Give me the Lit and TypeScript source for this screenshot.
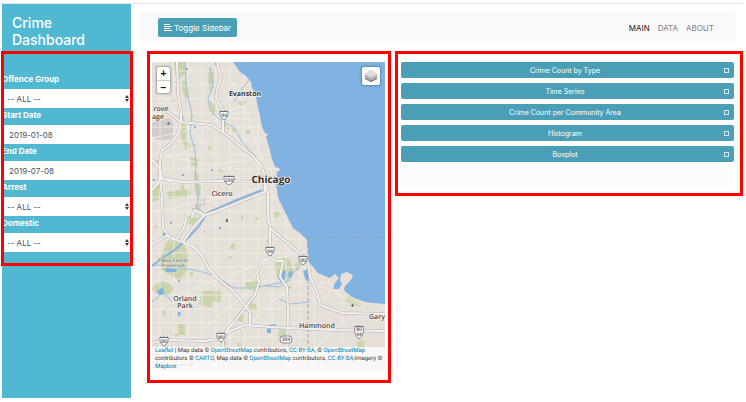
import { LitElement, html, css, svg } from "lit";
import { customElement } from "lit/decorators.js";

const SHORE =
  "M81 0 L84 4 L88 10 L94 14 L99 20 L100 26 L104 34 L105 41 L108 54 L110 65 L113 71 L116 72 L114 75 L118 88 L120 97 L123 105 L127 106 L128 108 L125 110 L124 121 L126 135 L131 146 L137 158 L141 166 L149 172 L155 178 L156 186 L157 200 L166 211 L178 216 L183 212 L185 214 L187 216 L183 221 L181 227 L187 227 L190 222 L188 218 L189 212 L195 210 L201 213 L199 218 L193 224 L192 228 L195 231 L200 235 L213 240 L233 242 V0 Z";

const HIGHWAYS = [
  "M25 0 L26 31 L29 50 L29 60 L27 70 L20 81 L10 88 L8 100 L8 115 L10 135 L11 166 L18 176 L31 180 L43 186 L50 194 L57 207 L65 216 L80 228 L90 240 L98 250 L98 263",
  "M13 48 L29 60 L60 63 L75 73 L88 84 L100 93 L110 105 L113 115 L113 130",
  "M71 70 L71 48 L64 36 L65 28 L69 15 L65 0",
  "M0 98 L9 108 L10 116 L30 120 L70 119 L110 120",
  "M0 128 L10 116 L20 120",
  "M113 130 L90 139 L65 149 L53 153 L43 163 L31 180",
  "M40 156 L42 148 L52 153",
  "M0 182 L14 174 L24 177",
  "M24 177 L32 166 L35 153",
  "M113 118 L116 131 L116 153 L118 166 L132 178 L150 193 L156 201 L158 215 L165 230 L168 243 L190 251 L233 252",
  "M118 166 L118 196 L109 200 L105 210 L107 220 L103 233 L93 246 L82 260 L75 268 L71 280 L70 309",
  "M118 196 L125 199 L131 199 L128 215 L135 225 L136 250 L135 300",
  "M0 281 L13 278 L53 279 L65 277 L73 271 L93 263 L118 265 L180 268 L233 269",
];

const STREETS = [
  "M0 20 L40 70 L100 130 L130 160",
  "M34 0 L60 40 L84 75 L112 112",
  "M0 76 L30 70 L90 44 L104 40",
  "M8 93 L60 103 L110 96",
  "M80 20 L96 53 L104 82 L118 110",
  "M40 70 L70 56 L104 58",
  "M0 150 L50 140 L110 126",
  "M0 251 L48 224 L100 205 L155 188",
  "M20 309 L60 258 L110 220",
  "M98 263 L120 240 L156 215",
  "M156 220 L182 230 L210 244",
  "M168 220 L178 220 L183 229 L191 229",
  "M190 240 L191 280",
  "M160 290 L190 260 L233 246",
];

const STREAMS = [
  "M33 0 L34 20 L37 40 L40 52 L38 72 L43 88 L44 104 L43 116 L47 132 L44 146 L52 150",
  "M58 5 L61 24 L56 36 L58 48 L67 57 L83 66 L90 80 L103 94 L108 103",
  "M97 18 L90 27 L82 40",
  "M0 203 L18 204 L42 208 L62 213 L82 226 L102 226 L122 222 L139 218",
  "M113 224 L128 225 L136 219 L144 207 L155 197",
  "M126 236 L138 242 L157 240",
  "M0 240 L12 230 L20 240",
];

const PARKS = [
  "M22 0 L34 0 L33 12 L26 18 L22 9Z",
  "M30 18 L35 20 L37 34 L34 40 L31 30Z",
  "M30 52 L35 62 L34 76 L39 84 L34 88 L29 75Z",
  "M57 6 L62 8 L62 24 L58 30 L56 20Z",
  "M57 38 L64 43 L66 52 L60 53Z",
  "M72 61 L80 66 L77 68 L71 64Z",
  "M86 40 L93 38 L95 43 L88 44Z",
  "M38 94 L47 98 L44 106 L39 102Z",
  "M42 110 L46 112 L49 128 L46 140 L43 130Z",
  "M0 125 L8 123 L7 138 L1 139Z",
  "M15 130 L33 127 L39 130 L37 134 L17 137Z",
  "M43 142 L49 141 L48 152 L44 152Z",
  "M16 178 L31 182 L37 191 L36 207 L27 218 L8 207 L7 197Z",
  "M33 153 L51 157 L43 164 L34 163Z",
  "M50 229 L69 229 L69 240 L60 240 L60 246 L47 242Z",
  "M26 262 L33 262 L33 273 L26 273Z",
  "M94 220 L104 218 L110 224 L104 230 L94 226Z",
  "M123 201 L133 195 L138 198 L142 211 L133 221 L125 216Z",
  "M97 242 L104 242 L105 248 L98 248Z",
  "M86 253 L93 253 L92 260 L87 260Z",
  "M127 267 L134 267 L134 278 L126 275Z",
  "M195 234 L203 239 L211 243 L207 245 L194 239Z",
  "M117 79 L119 95 L122 98 L120 86Z",
  "M122 149 L128 151 L126 157 L121 154Z",
  "M77 183 L83 181 L83 187 L77 188Z",
  "M142 203 L147 199 L150 206 L145 209Z",
  "M205 280 L212 278 L213 288 L206 288Z",
  "M2 224 L12 218 L22 226 L15 235 L3 231Z",
];

const PONDS = [
  "M13 206 L25 207 L24 210 L14 210Z",
  "M5 229 L11 225 L12 232 L7 233Z",
  "M128 211 L134 208 L133 217 L129 220 L126 216Z",
  "M136 211 L139 208 L141 213 L137 217Z",
  "M151 209 L157 207 L159 216 L154 219Z",
  "M115 267 L119 266 L119 271 L115 271Z",
  "M26 250 L29 250 L28 254 L26 254Z",
  "M161 200 L164 199 L164 203Z",
  "M116 263 L124 262 L123 266 L119 266Z",
  "M10 172 L14 169 L14 175Z",
];

interface Shield { x: number; y: number; n: string }
const SHIELDS: Shield[] = [
  { x: 72, y: 53, n: "94" },
  { x: 77, y: 118, n: "290" },
  { x: 118, y: 189, n: "94" },
  { x: 151, y: 198, n: "90" },
  { x: 12, y: 279, n: "80" },
  { x: 69, y: 275, n: "80" },
];

interface Place { x: number; y: number; n: string; k: string }
const PLACES: Place[] = [
  { x: 93, y: 34, n: "Evanston", k: "town" },
  { x: 119, y: 121, n: "Chicago", k: "city" },
  { x: 70, y: 134, n: "Cicero", k: "mid" },
  { x: 9, y: 49, n: "rove", k: "mid" },
  { x: 6, y: 57, n: "age", k: "mid" },
  { x: 21, y: 200, n: "Palos Forest", k: "park" },
  { x: 21, y: 205, n: "Preserves", k: "park" },
  { x: 33, y: 239, n: "Orland", k: "mid" },
  { x: 33, y: 246, n: "Park", k: "mid" },
  { x: 165, y: 266, n: "Hammond", k: "mid" },
  { x: 225, y: 257, n: "Gary", k: "mid" },
];

const range = (n: number, step: number, start = 0) =>
  Array.from({ length: n }, (_, i) => start + i * step);

@customElement("city-map")
class CityMap extends LitElement {
  static styles = css`
    :host { display: block; position: relative; font-family: Roboto, "Liberation Sans", sans-serif; }
    .map { display: block; width: 100%; height: auto; background: #e6dfd8; text-rendering: geometricPrecision; }
    .minor { stroke: #eae4de; stroke-width: 0.6; fill: none; }
    .major { stroke: #f2eee9; stroke-width: 0.8; fill: none; }
    .water { fill: #80b3e2; }
    .park { fill: #c9d4ad; }
    .stream { fill: none; stroke: #98c3df; stroke-width: 1; }
    .canal { fill: none; stroke: #86b4da; stroke-width: 2; }
    .case { fill: none; stroke: #b3adab; stroke-width: 3; stroke-linejoin: round; }
    .road { fill: none; stroke: #fdfcfb; stroke-width: 2; stroke-linejoin: round; }
    .center { fill: none; stroke: #d2ccc7; stroke-width: 0.4; }
    .airport { fill: #cfccca; }
    .border { fill: none; stroke: #8a99a6; stroke-width: 0.8; stroke-dasharray: 4 2; }
    .scale { fill: none; stroke: #777; stroke-width: 0.8; }
    .shield { fill: #fafafa; stroke: #70707e; stroke-width: 0.8; }
    .crown { fill: #70707e; }
    .num { font: 600 5px "Open Sans", sans-serif; fill: #555562; text-anchor: middle; }
    .place { font-family: "Open Sans", sans-serif; font-weight: 600; text-anchor: middle; fill: #4b4845; paint-order: stroke; stroke: #f3efea; stroke-width: 1.5; }
    .city { font-size: 10px; font-weight: 700; fill: #2e2d2c; }
    .town { font-size: 7px; font-weight: 700; fill: #3a3938; }
    .mid { font-size: 7px; }
    .park-name { font-size: 5px; fill: #6d7165; stroke-width: 1; }
    .zoom { position: absolute; left: 5px; top: 5px; display: flex; flex-direction: column; border-radius: 2px; background: #fff; box-shadow: 0 0 2px 1px rgba(0, 0, 0, 0.3); }
    .step { display: block; width: 13px; height: 13px; padding: 0; border: 0; background: none; font: 700 10px/13px "Liberation Sans", sans-serif; color: #111; }
    .step + .step { border-top: 1px solid #ccc; }
    .layers { position: absolute; right: 5px; top: 5px; width: 18px; height: 18px; padding: 1px; border: 0; border-radius: 2px; background: #fff; box-shadow: 0 0 2px 1px rgba(0, 0, 0, 0.25); }
    .layers svg { display: block; width: 16px; height: 16px; }
    .credit { position: absolute; left: 0; right: 0; bottom: 0; padding: 0 0 0 3px; background: rgba(255, 255, 255, 0.75); color: #333; font-size: 6px; line-height: 8px; text-rendering: geometricPrecision; }
    .credit a { color: #0078a8; text-decoration: none; }
  `;

  private place(p: Place) {
    return svg`<text class="place ${p.k === "park" ? "park-name" : p.k}" x=${p.x} y=${p.y}>${p.n}</text>`;
  }

  private shield(s: Shield) {
    const w = s.n.length > 2 ? 5 : 4;
    const d = `M${s.x - w} ${s.y - 4} Q${s.x - w / 2} ${s.y - 3} ${s.x} ${s.y - 4} Q${s.x + w / 2} ${s.y - 3} ${s.x + w} ${s.y - 4} Q${s.x + w + 1} ${s.y + 2} ${s.x} ${s.y + 5} Q${s.x - w - 1} ${s.y + 2} ${s.x - w} ${s.y - 4}Z`;
    return svg`<path class="shield" d=${d} /><rect class="crown" x=${s.x - w} y=${s.y - 4} width=${w * 2} height="1" /><text class="num" x=${s.x} y=${s.y + 2}>${s.n}</text>`;
  }

  render() {
    return html`
      <svg class="map" viewBox="0 0 233 309" role="img" aria-label="Map of Chicago">
        ${range(46, 5, 2).map((x) => svg`<path class="minor" d="M${x} 0V309" />`)}
        ${range(62, 5, 1).map((y) => svg`<path class="minor" d="M0 ${y}H233" />`)}
        ${PARKS.map((d) => svg`<path class="park" d=${d} />`)}
        ${range(48, 1).map((i) => svg`<rect class="park" x=${(i * 47 + 9) % 150} y=${(i * 71 + 13) % 300} width=${2 + (i % 3)} height=${2 + ((i * 2) % 3)} />`)}
        <path class="airport" d="M0 61 L7 59 L17 56 L23 63 L20 77 L8 79 L0 74Z M48 138 L54 136 L53 143 L47 145Z M46 155 L54 154 L52 159 L46 159Z" />
        ${range(12, 14, 8).map((x) => svg`<path class="major" d="M${x} 0V309" />`)}
        ${range(22, 14, 9).map((y) => svg`<path class="major" d="M0 ${y}H157" />`)}
        ${STREETS.map((d) => svg`<path class="major" d=${d} />`)}
        ${STREAMS.map((d) => svg`<path class="stream" d=${d} />`)}
        <path class="canal" d="M110 128 L85 138 L55 151 L47 164 L36 176 L24 187 L12 195 L0 204" />
        ${PONDS.map((d) => svg`<path class="water" d=${d} />`)}
        ${range(14, 1).map((i) => svg`<rect class="water" x=${(i * 37 + 5) % 78} y=${(i * 53 + 11) % 270} width="2" height="2" />`)}
        <path class="water" d=${SHORE} />
        <path class="border" d="M233 175H156V309" />
        ${HIGHWAYS.map((d) => svg`<path class="case" d=${d} />`)}
        ${HIGHWAYS.map((d) => svg`<path class="road" d=${d} />`)}
        ${HIGHWAYS.map((d) => svg`<path class="center" d=${d} />`)}
        <path class="crown" d="M15 61h3v1h-3z M16 60h1v3h-1z M74 157h2v3h-2z M199 243h3v1h-3z M200 242h1v3h-1z" />
        ${SHIELDS.map((s) => this.shield(s))}
        <path class="shield" d="M203 264 Q205 265 207 264 Q209 265 211 264 Q213 273 207 277 Q201 273 203 264Z" />
        <rect class="crown" x="203" y="264" width="8" height="1" />
        <text class="num" x="207" y="269">80</text>
        <text class="num" x="207" y="274">94</text>
        <rect class="shield" x="128" y="274" width="12" height="7" rx="3" />
        <text class="num" x="134" y="279">394</text>
        ${PLACES.map((p) => this.place(p))}
        <path class="scale" d="M5 292V303H40V292" />
      </svg>
      <div class="zoom">
        <button class="step" aria-label="Zoom in">+</button>
        <button class="step" aria-label="Zoom out">−</button>
      </div>
      <button class="layers" aria-label="Layers">
        <svg viewBox="0 0 26 26">
          <path fill="#858585" d="M3 15 L13 20 L23 15 V18 L13 23 L3 18Z" />
          <path fill="#ababab" d="M3 11 L13 16 L23 11 V15 L13 20 L3 15Z" />
          <path fill="#cdcdcd" d="M3 9 L13 3 L23 9 V11 L13 16 L3 11Z" />
          <path fill="#dedede" d="M3 9 L13 3 L23 9 L13 14Z" />
        </svg>
      </button>
      <div class="credit">
        <a href="#">Leaflet</a> | Map data © <a href="#">OpenStreetMap</a> contributors, <a href="#">CC-BY-SA</a>, © <a href="#">OpenStreetMap</a> contributors © <a href="#">CARTO</a>, Map data © <a href="#">OpenStreetMap</a> contributors, <a href="#">CC-BY-SA</a>,Imagery © <a href="#">Mapbox</a>
      </div>
    `;
  }
}

const CHARTS = ["Crime Count by Type", "Time Series", "Crime Count per Community Area", "Histogram", "Boxplot"];

interface Field { id: string; label: string; value: string; date?: boolean }
const FIELDS: Field[] = [
  { id: "group", label: "Offence Group", value: "-- ALL --" },
  { id: "start", label: "Start Date", value: "2019-01-08", date: true },
  { id: "end", label: "End Date", value: "2019-07-08", date: true },
  { id: "arrest", label: "Arrest", value: "-- ALL --" },
  { id: "domestic", label: "Domestic", value: "-- ALL --" },
];

@customElement("app-root")
class AppRoot extends LitElement {
  static styles = css`
    :host { display: block; font-family: Inter, "Liberation Sans", sans-serif; background: #fff; }
    * { box-sizing: border-box; }
    .page { display: flex; min-height: 100vh; padding: 3px 3px 4px 2px; }
    .sidebar { flex: none; width: 129px; border-top: 1px solid #e4e4e4; background: #50b8d0; }
    .title { margin: 0; padding: 10px 10px 3px; font-size: 14px; line-height: 17px; font-weight: 500; color: #fff; }
    .filters { margin: 0 -2px 0 -1px; padding: 18px 0 11px; border: 3px solid #f00; overflow: hidden; }
    .label { display: block; margin-left: -2px; height: 17px; font-size: 8px; line-height: 15px; font-weight: 700; color: #fff; }
    .field { position: relative; height: 19px; }
    .control { display: block; width: 100%; height: 100%; margin: 0; padding: 1px 3px 0; border: 0; border-radius: 0; appearance: none; background: #fff; color: #495057; font: 400 8px Inter, sans-serif; }
    .date { padding-left: 5px; }
    .arrows { position: absolute; right: 1px; top: 6px; width: 4px; height: 7px; fill: #343a40; pointer-events: none; }
    .main { flex: 1; min-width: 0; border-top: 1px solid #e4e4e4; }
    .navbar { display: flex; align-items: center; justify-content: space-between; margin: 9px 8px 9px 10px; height: 29px; padding: 0 21px 0 17px; background: #f8f9fb; box-shadow: 0 0 2px #eceef0; }
    .toggle { display: flex; align-items: center; gap: 2px; height: 19px; padding: 0 6px; border: 0; border-radius: 2px; background: #4a9fb6; color: #fff; font: 400 8px Inter, sans-serif; }
    .toggle svg { width: 8px; height: 7px; fill: #fff; }
    .links { display: flex; gap: 8px; font-size: 8px; }
    .link { color: #7f8081; text-decoration: none; }
    .current { color: #19191a; }
    .content { display: grid; grid-template-columns: 244fr 348fr; gap: 4px; align-items: start; margin-left: 16px; }
    .map-box { border: 3px solid #f00; padding: 8px 3px 9px 2px; }
    .chart-box { border: 3px solid #f00; padding: 8px 6px 5px 2px; }
    .charts { display: flex; flex-direction: column; gap: 5px; margin-left: 1px; }
    .chart { display: flex; align-items: center; height: 16px; padding: 0 5px; border: 0; border-radius: 2px; background: #4a9fb6; color: #fff; font: 400 7px Inter, sans-serif; }
    .chart-name { flex: 1; text-align: center; }
    .expand { width: 5px; height: 5px; border: 1px solid #d5e9ef; }
    .rest { height: 22px; margin-top: 4px; background: #fcfcfc; }
  `;

  private field(f: Field) {
    return html`
      <label class="label" for=${f.id}>${f.label}</label>
      <div class="field">
        ${f.date
          ? html`<input class="control date" id=${f.id} type="text" .value=${f.value} />`
          : html`<select class="control" id=${f.id}><option>${f.value}</option></select>
              <svg class="arrows" viewBox="0 0 4 7"><path d="M2 0L4 3H0Z M0 4H4L2 7Z" /></svg>`}
      </div>
    `;
  }

  render() {
    return html`
      <div class="page">
        <aside class="sidebar">
          <h1 class="title">Crime Dashboard</h1>
          <form class="filters">${FIELDS.map((f) => this.field(f))}</form>
        </aside>
        <main class="main">
          <nav class="navbar">
            <button class="toggle">
              <svg viewBox="0 0 8 7"><path d="M0 0H6V1H0Z M0 2H8V3H0Z M0 4H6V5H0Z M0 6H8V7H0Z" /></svg>
              <span>Toggle Sidebar</span>
            </button>
            <div class="links">
              <a class="link current" href="#">MAIN</a>
              <a class="link" href="#">DATA</a>
              <a class="link" href="#">ABOUT</a>
            </div>
          </nav>
          <div class="content">
            <section class="map-box"><city-map></city-map></section>
            <section class="chart-box">
              <div class="charts">
                ${CHARTS.map((c) => html`<button class="chart"><span class="chart-name">${c}</span><span class="expand"></span></button>`)}
              </div>
              <div class="rest"></div>
            </section>
          </div>
        </main>
      </div>
    `;
  }
}
